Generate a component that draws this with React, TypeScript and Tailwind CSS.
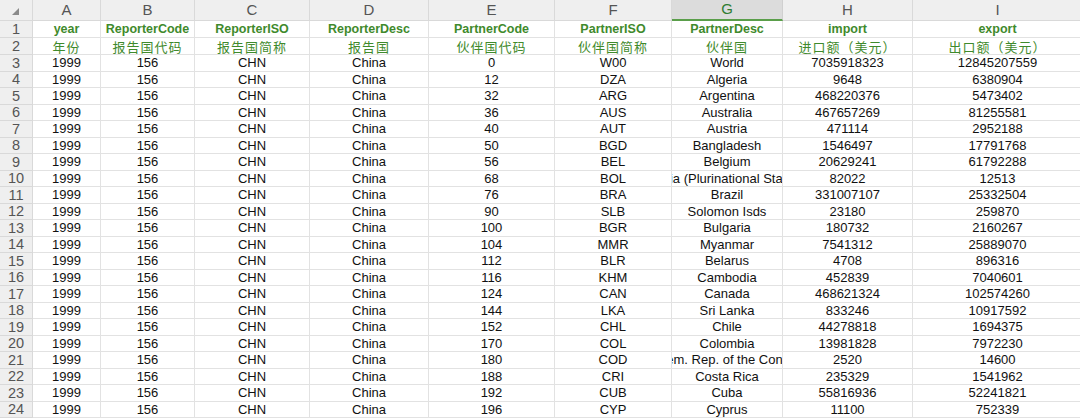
import React from "react";

const cols = ["A", "B", "C", "D", "E", "F", "G", "H", "I"];

const headEn = ["year", "ReporterCode", "ReporterISO", "ReporterDesc", "PartnerCode", "PartnerISO", "PartnerDesc", "import", "export"];
const headZh = ["年份", "报告国代码", "报告国简称", "报告国", "伙伴国代码", "伙伴国简称", "伙伴国", "进口额（美元）", "出口额（美元）"];

const rows: [string, string, string, string, string][] = [
  ["0", "W00", "World", "7035918323", "12845207559"],
  ["12", "DZA", "Algeria", "9648", "6380904"],
  ["32", "ARG", "Argentina", "468220376", "5473402"],
  ["36", "AUS", "Australia", "467657269", "81255581"],
  ["40", "AUT", "Austria", "471114", "2952188"],
  ["50", "BGD", "Bangladesh", "1546497", "17791768"],
  ["56", "BEL", "Belgium", "20629241", "61792288"],
  ["68", "BOL", "Bolivia (Plurinational State of)", "82022", "12513"],
  ["76", "BRA", "Brazil", "331007107", "25332504"],
  ["90", "SLB", "Solomon Isds", "23180", "259870"],
  ["100", "BGR", "Bulgaria", "180732", "2160267"],
  ["104", "MMR", "Myanmar", "7541312", "25889070"],
  ["112", "BLR", "Belarus", "4708", "896316"],
  ["116", "KHM", "Cambodia", "452839", "7040601"],
  ["124", "CAN", "Canada", "468621324", "102574260"],
  ["144", "LKA", "Sri Lanka", "833246", "10917592"],
  ["152", "CHL", "Chile", "44278818", "1694375"],
  ["170", "COL", "Colombia", "13981828", "7972230"],
  ["180", "COD", "Dem. Rep. of the Congo", "2520", "14600"],
  ["188", "CRI", "Costa Rica", "235329", "1541962"],
  ["192", "CUB", "Cuba", "55816936", "52241821"],
  ["196", "CYP", "Cyprus", "11100", "752339"],
];

function Cell({ children, className = "" }: { children?: React.ReactNode; className?: string }) {
  return (
    <div className={`flex items-center justify-center overflow-hidden whitespace-nowrap border-r border-b border-[#e2e2e2] leading-none ${className}`}>
      {children}
    </div>
  );
}

function RowNum({ n, h }: { n: number; h: string }) {
  return (
    <div className={`${h} flex items-center justify-center bg-[#efefef] border-r border-b border-[#d9d9d9] text-[14.5px] leading-none text-[#555]`}>
      {n}
    </div>
  );
}

export default function App() {
  return (
    <div className="w-[1080px] h-[418px] overflow-hidden bg-white" style={{ fontFamily: '"Liberation Sans", Arial, sans-serif' }}>
      <div className="grid grid-cols-[33px_68px_94px_115px_119px_126px_117px_111px_130px_170px]">
        {/* column letters */}
        <div className="h-[21px] relative bg-[#efefef] border-r border-b border-[#d9d9d9]">
          <svg className="absolute left-[12px] top-[8px]" width="7" height="7" viewBox="0 0 7 7">
            <polygon points="7,0 7,7 0,7" fill="#8a8a8a" />
          </svg>
        </div>
        {cols.map((c) =>
          c === "G" ? (
            <div key={c} className="h-[21px] flex items-center justify-center bg-[#dcdcdc] border-r border-[#d0d0d0] border-b-2 border-b-[#5a9e4a] text-[15px] text-[#2e7d32]">
              {c}
            </div>
          ) : (
            <div key={c} className="h-[21px] flex items-center justify-center bg-[#efefef] border-r border-b border-[#d9d9d9] text-[15px] text-[#555]">
              {c}
            </div>
          )
        )}

        {/* row 1 */}
        <RowNum n={1} h="h-[17px]" />
        {headEn.map((t) => (
          <Cell key={t} className="h-[17px] text-[12.5px] font-bold text-[#3f8a2c]">
            {t}
          </Cell>
        ))}

        {/* row 2 */}
        <RowNum n={2} h="h-[17px]" />
        {headZh.map((t) => (
          <Cell key={t} className="h-[17px] text-[13px] tracking-[1px] text-[#3f8a2c]">
            <span style={{ fontFamily: '"Noto Sans CJK SC", sans-serif' }}>{t}</span>
          </Cell>
        ))}

        {/* data */}
        {rows.map((r, i) => {
          const h = "h-[16.5px]";
          return (
            <React.Fragment key={i}>
              <RowNum n={i + 3} h={h} />
              <Cell className={`${h} text-[13px] text-[#111]`}>1999</Cell>
              <Cell className={`${h} text-[13px] text-[#111]`}>156</Cell>
              <Cell className={`${h} text-[13px] text-[#111]`}>CHN</Cell>
              <Cell className={`${h} text-[13px] text-[#111]`}>China</Cell>
              <Cell className={`${h} text-[13px] text-[#111]`}>{r[0]}</Cell>
              <Cell className={`${h} text-[13px] text-[#111]`}>{r[1]}</Cell>
              <Cell className={`${h} text-[13px] text-[#111]`}>{r[2]}</Cell>
              <Cell className={`${h} text-[13px] text-[#111]`}>{r[3]}</Cell>
              <Cell className={`${h} text-[13px] text-[#111]`}>{r[4]}</Cell>
            </React.Fragment>
          );
        })}
      </div>
    </div>
  );
}
